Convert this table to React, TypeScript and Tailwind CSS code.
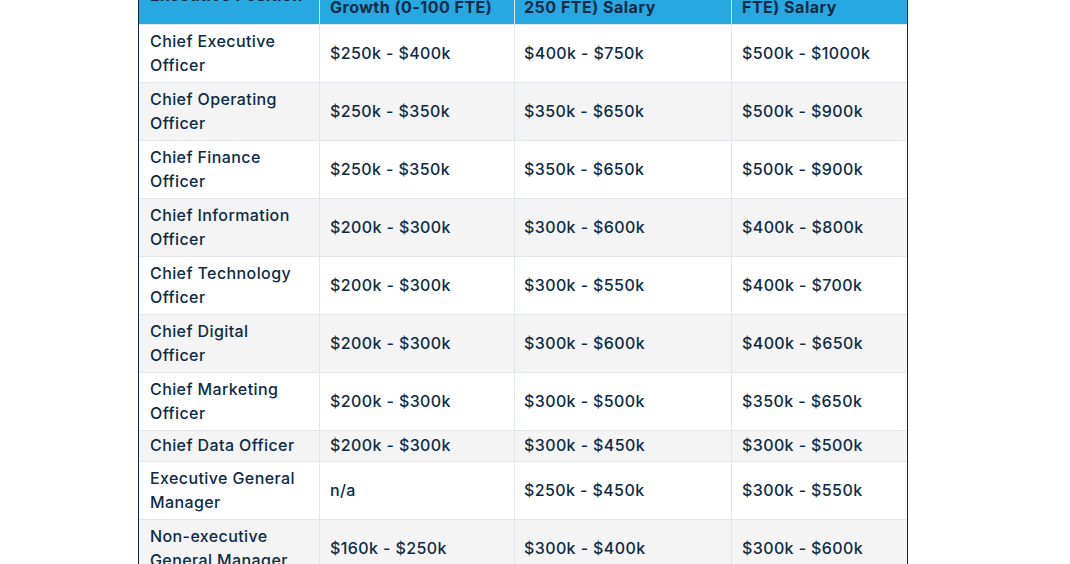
import React from 'react';

type Row = { role: string[]; a: string; b: string; c: string; h: 'tall' | 'short' };

const rows: Row[] = [
  { role: ['Chief Executive', 'Officer'], a: '$250k - $400k', b: '$400k - $750k', c: '$500k - $1000k', h: 'tall' },
  { role: ['Chief Operating', 'Officer'], a: '$250k - $350k', b: '$350k - $650k', c: '$500k - $900k', h: 'tall' },
  { role: ['Chief Finance', 'Officer'], a: '$250k - $350k', b: '$350k - $650k', c: '$500k - $900k', h: 'tall' },
  { role: ['Chief Information', 'Officer'], a: '$200k - $300k', b: '$300k - $600k', c: '$400k - $800k', h: 'tall' },
  { role: ['Chief Technology', 'Officer'], a: '$200k - $300k', b: '$300k - $550k', c: '$400k - $700k', h: 'tall' },
  { role: ['Chief Digital', 'Officer'], a: '$200k - $300k', b: '$300k - $600k', c: '$400k - $650k', h: 'tall' },
  { role: ['Chief Marketing', 'Officer'], a: '$200k - $300k', b: '$300k - $500k', c: '$350k - $650k', h: 'tall' },
  { role: ['Chief Data Officer'], a: '$200k - $300k', b: '$300k - $450k', c: '$300k - $500k', h: 'short' },
  { role: ['Executive General', 'Manager'], a: 'n/a', b: '$250k - $450k', c: '$300k - $550k', h: 'tall' },
  { role: ['Non-executive', 'General Manager'], a: '$160k - $250k', b: '$300k - $400k', c: '$300k - $600k', h: 'tall' },
];

const first = 'flex items-center pl-[11px] pr-[6px] pb-[2px] border-r border-[#e3e7eb]';
const second = 'flex items-center pl-[10px] pr-[6px] pb-[2px] border-r border-[#e3e7eb]';
const third = 'flex items-center pl-[9px] pr-[6px] pb-[2px] border-r border-[#e3e7eb]';
const last = 'flex items-center pl-[10px] pb-[2px]';

const App: React.FC = () => {
  return (
    <div className="min-h-screen bg-white overflow-hidden" style={{ fontFamily: 'Inter, "Noto Sans", sans-serif' }}>
      {/* salary table, page scrolled so header is partly cut off */}
      <div className="ml-[138px] -mt-[33px] w-[770px] border border-[#0d2b45] text-[16px] leading-[24px] tracking-[0.4px] text-[#0d2b45]">
        <div className="grid grid-cols-[181px_195px_217px_175px] h-[57px] bg-[#27a8e0] border-b border-[#e3e7eb] font-bold tracking-[0.5px]">
          <div className={first}>Executive Position</div>
          <div className={second}>
            Start-Up Salary
            <br />
            Growth (0-100 FTE)
          </div>
          <div className={third}>
            Mid-Size (100-
            <br />
            250 FTE) Salary
          </div>
          <div className={last}>
            Large (250+
            <br />
            FTE) Salary
          </div>
        </div>

        {rows.map((r, i) => (
          <div
            key={i}
            className={`grid grid-cols-[181px_195px_217px_175px] border-b border-[#e3e7eb] font-medium ${
              r.h === 'tall' ? 'h-[58px]' : 'h-[31px]'
            } ${i % 2 === 1 ? 'bg-[#f4f4f4]' : 'bg-white'}`}
          >
            <div className={first}>
              <div>
                {r.role.map((t, j) => (
                  <div key={j}>{t}</div>
                ))}
              </div>
            </div>
            <div className={second}>{r.a}</div>
            <div className={third}>{r.b}</div>
            <div className={last}>{r.c}</div>
          </div>
        ))}
      </div>
    </div>
  );
};

export default App;
